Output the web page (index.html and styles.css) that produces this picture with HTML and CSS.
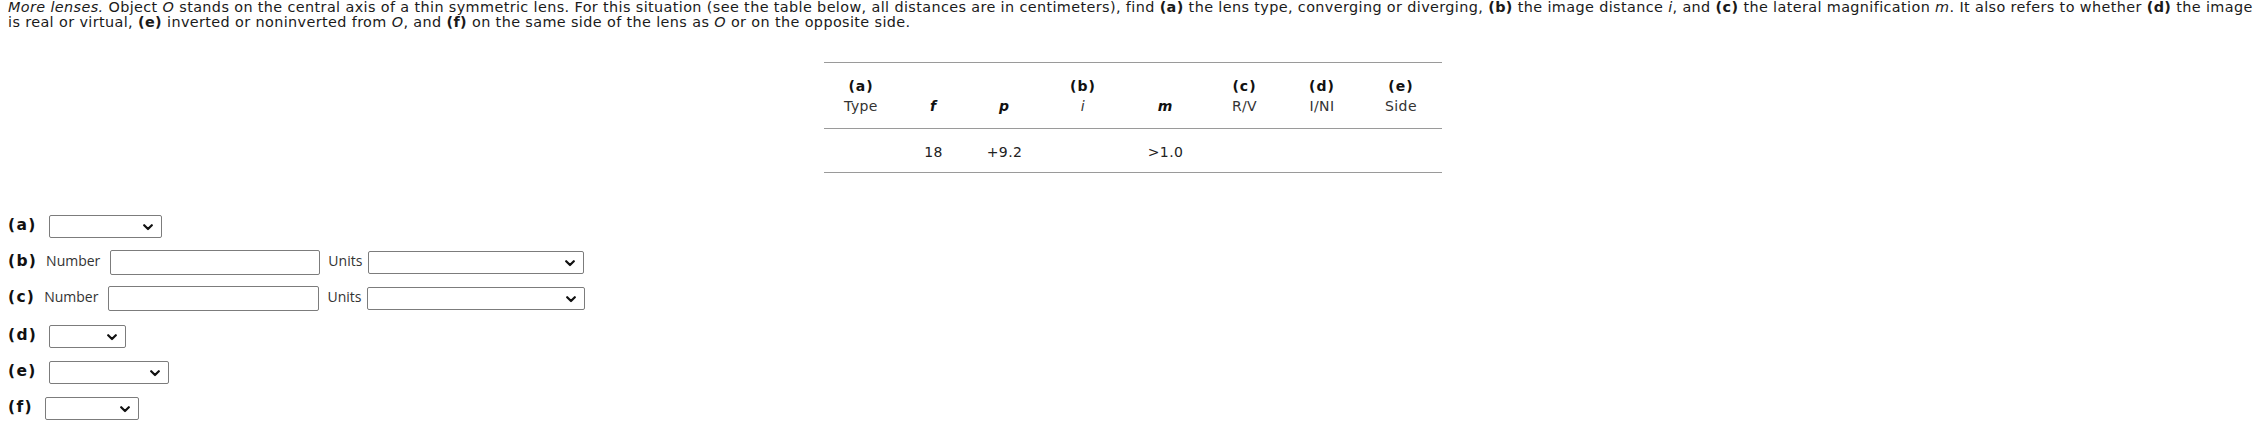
FILE: index.html
```html
<!DOCTYPE html>
<html lang="en">
<head>
<meta charset="utf-8">
<title>More lenses</title>
<link rel="stylesheet" href="styles.css">
</head>
<body>
<p class="intro"><i>More lenses.</i> Object <i>O</i> stands on the central axis of a thin symmetric lens. For this situation (see the table below, all distances are in centimeters), find <b>(a)</b> the lens type, converging or diverging, <b>(b)</b> the image distance <i>i</i>, and <b>(c)</b> the lateral magnification <i>m</i>. It also refers to whether <b>(d)</b> the image is real or virtual, <b>(e)</b> inverted or noninverted from <i>O</i>, and <b>(f)</b> on the same side of the lens as <i>O</i> or on the opposite side.</p>

<table class="data">
  <thead>
    <tr>
      <th class="c1"><b>(a)</b><br><span class="sub">Type</span></th>
      <th class="c2">&nbsp;<br><b><i>f</i></b></th>
      <th class="c3">&nbsp;<br><b><i>p</i></b></th>
      <th class="c4"><b>(b)</b><br><i class="sub">i</i></th>
      <th class="c5">&nbsp;<br><b><i>m</i></b></th>
      <th class="c6"><b>(c)</b><br><span class="sub">R/V</span></th>
      <th class="c7"><b>(d)</b><br><span class="sub">I/NI</span></th>
      <th class="c8"><b>(e)</b><br><span class="sub">Side</span></th>
    </tr>
  </thead>
  <tbody>
    <tr>
      <td></td>
      <td>18</td>
      <td>+9.2</td>
      <td></td>
      <td>&gt;1.0</td>
      <td></td>
      <td></td>
      <td></td>
    </tr>
  </tbody>
</table>

<div class="answers">
  <div class="row">
    <span class="lab"><b>(a)</b></span>
    <span class="sel w-a"><select aria-label="(a)"><option></option></select><svg class="chev" viewBox="0 0 10 7" width="10" height="7"><polyline points="1.2,1.2 5,5 8.8,1.2"/></svg></span>
  </div>
  <div class="row tight">
    <span class="lab"><b>(b)</b> <span class="word">Number</span></span>
    <input class="num w-bn" type="text" aria-label="(b) Number">
    <span class="word">Units</span>
    <span class="sel w-bu"><select aria-label="(b) Units"><option></option></select><svg class="chev" viewBox="0 0 10 7" width="10" height="7"><polyline points="1.2,1.2 5,5 8.8,1.2"/></svg></span>
  </div>
  <div class="row tight">
    <span class="lab"><b>(c)</b> <span class="word">Number</span></span>
    <input class="num w-cn" type="text" aria-label="(c) Number">
    <span class="word">Units</span>
    <span class="sel w-cu"><select aria-label="(c) Units"><option></option></select><svg class="chev" viewBox="0 0 10 7" width="10" height="7"><polyline points="1.2,1.2 5,5 8.8,1.2"/></svg></span>
  </div>
  <div class="row after-inputs">
    <span class="lab"><b>(d)</b></span>
    <span class="sel w-d"><select aria-label="(d)"><option></option></select><svg class="chev" viewBox="0 0 10 7" width="10" height="7"><polyline points="1.2,1.2 5,5 8.8,1.2"/></svg></span>
  </div>
  <div class="row">
    <span class="lab"><b>(e)</b></span>
    <span class="sel w-e"><select aria-label="(e)"><option></option></select><svg class="chev" viewBox="0 0 10 7" width="10" height="7"><polyline points="1.2,1.2 5,5 8.8,1.2"/></svg></span>
  </div>
  <div class="row">
    <span class="lab"><b>(f)</b></span>
    <span class="sel w-f"><select aria-label="(f)"><option></option></select><svg class="chev" viewBox="0 0 10 7" width="10" height="7"><polyline points="1.2,1.2 5,5 8.8,1.2"/></svg></span>
  </div>
</div>
</body>
</html>
```

FILE: styles.css
```css
html, body {
  background: #ffffff;
}

body {
  margin: 0;
  padding: 0 8px;
  font-family: "DejaVu Sans", Verdana, sans-serif;
  font-size: 14px;
  color: #1a1a1a;
}

.intro {
  margin: 0;
  font-size: 14.4px;
  line-height: 15px;
  letter-spacing: 0.38px;
}

.intro b {
  font-weight: bold;
}

/* ---------- data table ---------- */
.data {
  margin: 32px auto 0;
  border-collapse: collapse;
  border-top: 1px solid #9a9a9a;
  border-bottom: 1px solid #9a9a9a;
  font-size: 14px;
  line-height: 20px;
  letter-spacing: 0.4px;
  color: #222;
}

.data th {
  font-weight: normal;
  text-align: center;
  vertical-align: top;
  padding: 13px 0 12px;
  height: 40px;
  border-bottom: 1px solid #9a9a9a;
}

.data th b {
  font-weight: bold;
  color: #111;
  letter-spacing: 1px;
}

.data .sub {
  color: #333;
}

.data td {
  text-align: center;
  padding: 13px 0 10px;
  height: 20px;
}

.c1 { width: 75px; }
.c2 { width: 70px; }
.c3 { width: 72px; }
.c4 { width: 85px; }
.c5 { width: 80px; }
.c6 { width: 78px; }
.c7 { width: 77px; }
.c8 { width: 81px; }

/* ---------- answers ---------- */
.answers {
  margin-top: 41px;
  display: flex;
  flex-direction: column;
  gap: 11px;
}

.row {
  display: flex;
  align-items: center;
  height: 25px;
  gap: 12px;
}

.row.tight {
  gap: 6px;
}

.row.after-inputs {
  margin-top: 2px;
}

.lab {
  font-size: 15.5px;
  line-height: 18px;
  color: #111;
  position: relative;
  top: -2px;
  white-space: nowrap;
}

.lab b {
  font-weight: bold;
  letter-spacing: 1.3px;
}

.word {
  font-family: "Open Sans", "Noto Sans", sans-serif;
  font-size: 14px;
  color: #333;
  position: relative;
  top: -2px;
}

.lab .word {
  top: 0;
  margin-left: 4px;
}

.sel {
  position: relative;
  display: inline-flex;
  height: 23px;
}

.sel select {
  appearance: none;
  -webkit-appearance: none;
  width: 100%;
  height: 23px;
  margin: 0;
  padding: 0 24px 0 4px;
  border: 1px solid #7c7c7c;
  border-radius: 2px;
  background: #fff;
  font: 13px "DejaVu Sans", sans-serif;
}

.chev {
  position: absolute;
  right: 9px;
  top: 9px;
  fill: none;
  stroke: #111;
  stroke-width: 2.2;
  stroke-linecap: round;
  stroke-linejoin: round;
  pointer-events: none;
}

.num {
  box-sizing: border-box;
  height: 25px;
  margin: 0 2px 0 4px;
  padding: 0 4px;
  border: 1px solid #7c7c7c;
  border-radius: 2px;
  background: #fff;
  font: 13px "DejaVu Sans", sans-serif;
}

.w-a { width: 113px; }
.w-bn { width: 210px; }
.w-bu { width: 216px; }
.w-cn { width: 211px; }
.w-cu { width: 218px; }
.w-d { width: 77px; }
.w-e { width: 120px; }
.w-f { width: 94px; }
```
